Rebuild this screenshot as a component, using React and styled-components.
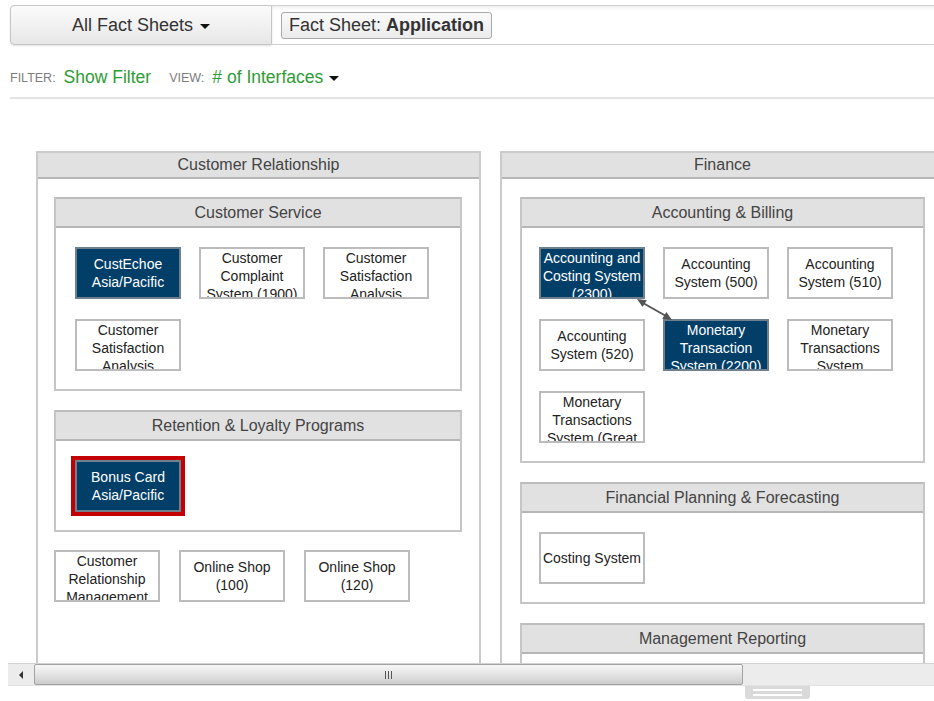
import React from 'react';
import styled, { createGlobalStyle, css } from 'styled-components';

const GlobalStyle = createGlobalStyle`
  html, body { margin: 0; padding: 0; background: #fff; }
  body { font-family: "Liberation Sans", Arial, sans-serif; overflow: hidden; }
`;

const Page = styled.div`
  width: 934px;
  height: 701px;
  overflow: hidden;
  font-family: "Liberation Sans", Arial, sans-serif;
`;

/* ---------- top toolbar ---------- */
const Toolbar = styled.div`
  display: flex;
  height: 40px;
  margin: 5px 0 0 10px;
`;

const AllButton = styled.div`
  width: 262px;
  box-sizing: border-box;
  border: 1px solid #c6c6c6;
  border-radius: 4px 0 0 4px;
  background: linear-gradient(#fbfbfb, #e7e7e7);
  box-shadow: 0 1px 2px rgba(0, 0, 0, 0.12);
  display: flex;
  align-items: center;
  justify-content: center;
  gap: 7px;
  font-size: 18px;
  color: #333;
`;

const Caret = styled.span`
  display: inline-block;
  width: 0;
  height: 0;
  border-left: 5px solid transparent;
  border-right: 5px solid transparent;
  border-top: 5px solid #111;
  margin-top: 2px;
`;

const ToolbarRest = styled.div`
  flex: 1;
  display: flex;
  align-items: center;
  padding-left: 9px;
  border-top: 1px solid #d0d0d0;
  border-bottom: 1px solid #d0d0d0;
  box-shadow: inset 0 4px 4px -3px rgba(0, 0, 0, 0.1);
`;

const Pill = styled.div`
  height: 27px;
  box-sizing: border-box;
  border: 1px solid #a8a8a8;
  border-radius: 3px;
  background: linear-gradient(#fafafa, #ebebeb);
  padding: 0 7px;
  display: flex;
  align-items: center;
  font-size: 18px;
  color: #333;
  b { font-weight: bold; }
`;

/* ---------- filter bar ---------- */
const FilterBar = styled.div`
  margin-left: 10px;
  height: 54px;
  box-sizing: border-box;
  padding-top: 13px;
  border-bottom: 2px solid #e3e3e3;
  display: flex;
  align-items: center;
`;

const FilterLabel = styled.span`
  font-size: 12.5px;
  color: #7d7d7d;
  text-transform: uppercase;
  margin-right: 8px;
  margin-left: ${p => p.$gap || 0}px;
`;

const FilterLink = styled.span`
  font-size: 17.5px;
  color: #2e9c36;
  display: inline-flex;
  align-items: center;
  gap: 6px;
`;

/* ---------- diagram ---------- */
const Viewport = styled.div`
  margin-left: 8px;
  height: 564px;
  box-sizing: border-box;
  overflow: hidden;
  padding: 52px 0 0 28px;
`;

const Canvas = styled.div`
  display: flex;
  gap: 19px;
  align-items: flex-start;
`;

const Column = styled.div`
  flex-shrink: 0;
  width: 445px;
  min-height: 620px;
  box-sizing: border-box;
  border: 2px solid #cbcbcb;
`;

const headerStyle = css`
  background: #e1e1e1;
  border-bottom: 2px solid #b6b6b6;
  display: flex;
  align-items: center;
  justify-content: center;
  font-size: 16px;
  color: #444;
  box-sizing: content-box;
`;

const ColumnHeader = styled.div`
  ${headerStyle}
  height: 24px;
`;

const ColumnBody = styled.div`
  display: flex;
  flex-direction: column;
  gap: 19px;
  padding: 18px ${p => p.$pr}px 0 ${p => p.$pl}px;
`;

const Group = styled.div`
  border: 2px solid #c6c6c6;
  border-top-color: #bdbdbd;
`;

const GroupHeader = styled.div`
  ${headerStyle}
  height: 27px;
`;

const GroupBody = styled.div`
  position: relative;
  display: grid;
  grid-template-columns: repeat(3, 106px);
  column-gap: 18px;
  row-gap: 20px;
  padding: 19px 0 18px ${p => p.$pl}px;
`;

const NodeRow = styled.div`
  display: flex;
  gap: 19px;
  margin-top: -1px;
`;

const Node = styled.div`
  width: 106px;
  height: 52px;
  box-sizing: border-box;
  border: 2px solid ${p => (p.$dark ? '#6e808e' : '#bcbcbc')};
  background: ${p => (p.$dark ? '#023f68' : '#fff')};
  color: ${p => (p.$dark ? '#fff' : '#222')};
  ${p => p.$selected && css`box-shadow: 0 0 0 4px #c40000;`}
  display: flex;
  align-items: safe center;
  justify-content: center;
  overflow: hidden;
  padding: 0;
  font-size: 14px;
  line-height: 18px;
  text-align: center;
`;

const ArrowOverlay = styled.svg`
  position: absolute;
  left: 110px;
  top: 66px;
  z-index: 2;
  overflow: visible;
`;

/* ---------- scrollbar ---------- */
const HScroll = styled.div`
  margin-left: 8px;
  height: 23px;
  box-sizing: border-box;
  background: #ececec;
  border-top: 1px solid #d2d2d2;
  border-bottom: 1px solid #e2e2e2;
  display: flex;
  align-items: center;
`;

const ScrollArrow = styled.div`
  width: 26px;
  display: flex;
  justify-content: center;
  &::before {
    content: '';
    border-right: 4px solid #333;
    border-top: 4px solid transparent;
    border-bottom: 4px solid transparent;
  }
`;

const Thumb = styled.div`
  width: 709px;
  height: 21px;
  box-sizing: border-box;
  border: 1px solid #a2a2a2;
  border-radius: 2px;
  background: linear-gradient(#f6f6f6, #e6e6e6 45%, #cbcbcb);
  display: flex;
  align-items: center;
  justify-content: center;
  gap: 2px;
`;

const Grip = styled.span`
  width: 1px;
  height: 8px;
  background: #555;
`;

const TabRow = styled.div`
  display: flex;
  padding-left: 745px;
`;

const Tab = styled.div`
  width: 65px;
  height: 13px;
  box-sizing: border-box;
  background: #dadada;
  border-radius: 0 0 3px 3px;
  padding: 3px 8px 0;
  display: flex;
  flex-direction: column;
  gap: 3px;
  span {
    height: 2px;
    background: #fff;
  }
`;

const crGroups = [
  {
    title: 'Customer Service',
    nodes: [
      { t: 'CustEchoe Asia/Pacific', dark: true },
      { t: 'Customer Complaint System (1900)' },
      { t: 'Customer Satisfaction Analysis' },
      { t: 'Customer Satisfaction Analysis' },
    ],
  },
  {
    title: 'Retention & Loyalty Programs',
    nodes: [{ t: 'Bonus Card Asia/Pacific', dark: true, selected: true }],
  },
];

const finGroups = [
  {
    title: 'Accounting & Billing',
    arrow: true,
    nodes: [
      { t: 'Accounting and Costing System (2300)', dark: true },
      { t: 'Accounting System (500)' },
      { t: 'Accounting System (510)' },
      { t: 'Accounting System (520)' },
      { t: 'Monetary Transaction System (2200)', dark: true },
      { t: 'Monetary Transactions System (Germany)' },
      { t: 'Monetary Transactions System (Great Britain)' },
    ],
  },
  {
    title: 'Financial Planning & Forecasting',
    nodes: [{ t: 'Costing System' }],
  },
  {
    title: 'Management Reporting',
    nodes: [{ t: 'Management Cockpit' }],
  },
];

const Arrow = () => (
  <ArrowOverlay width="45" height="32" viewBox="0 0 45 32">
    <line x1="11" y1="9" x2="34" y2="22" stroke="#555" strokeWidth="2" />
    <polygon points="5,5 10.6,13 14.8,6.2" fill="#555" />
    <polygon points="40,26 30.2,24.8 34.4,18" fill="#555" />
  </ArrowOverlay>
);

const GroupBox = ({ g, pl }) => (
  <Group>
    <GroupHeader>{g.title}</GroupHeader>
    <GroupBody $pl={pl}>
      {g.nodes.map((n, i) => (
        <Node key={i} $dark={n.dark} $selected={n.selected}>
          <span>{n.t}</span>
        </Node>
      ))}
      {g.arrow && <Arrow />}
    </GroupBody>
  </Group>
);

export default function App() {
  return (
    <Page>
      <GlobalStyle />
      <Toolbar>
        <AllButton>
          All Fact Sheets <Caret />
        </AllButton>
        <ToolbarRest>
          <Pill>
            <span>
              Fact Sheet: <b>Application</b>
            </span>
          </Pill>
        </ToolbarRest>
      </Toolbar>

      <FilterBar>
        <FilterLabel>Filter:</FilterLabel>
        <FilterLink>Show Filter</FilterLink>
        <FilterLabel $gap={18}>View:</FilterLabel>
        <FilterLink>
          # of Interfaces <Caret />
        </FilterLink>
      </FilterBar>

      <Viewport>
        <Canvas>
          <Column>
            <ColumnHeader>Customer Relationship</ColumnHeader>
            <ColumnBody $pl={16} $pr={17}>
              {crGroups.map((g, i) => (
                <GroupBox key={i} g={g} pl={19} />
              ))}
              <NodeRow>
                <Node><span>Customer Relationship Management</span></Node>
                <Node><span>Online Shop (100)</span></Node>
                <Node><span>Online Shop (120)</span></Node>
              </NodeRow>
            </ColumnBody>
          </Column>
          <Column>
            <ColumnHeader>Finance</ColumnHeader>
            <ColumnBody $pl={18} $pr={18}>
              {finGroups.map((g, i) => (
                <GroupBox key={i} g={g} pl={17} />
              ))}
            </ColumnBody>
          </Column>
        </Canvas>
      </Viewport>

      <HScroll>
        <ScrollArrow />
        <Thumb>
          <Grip />
          <Grip />
          <Grip />
        </Thumb>
      </HScroll>
      <TabRow>
        <Tab>
          <span />
          <span />
        </Tab>
      </TabRow>
    </Page>
  );
}
